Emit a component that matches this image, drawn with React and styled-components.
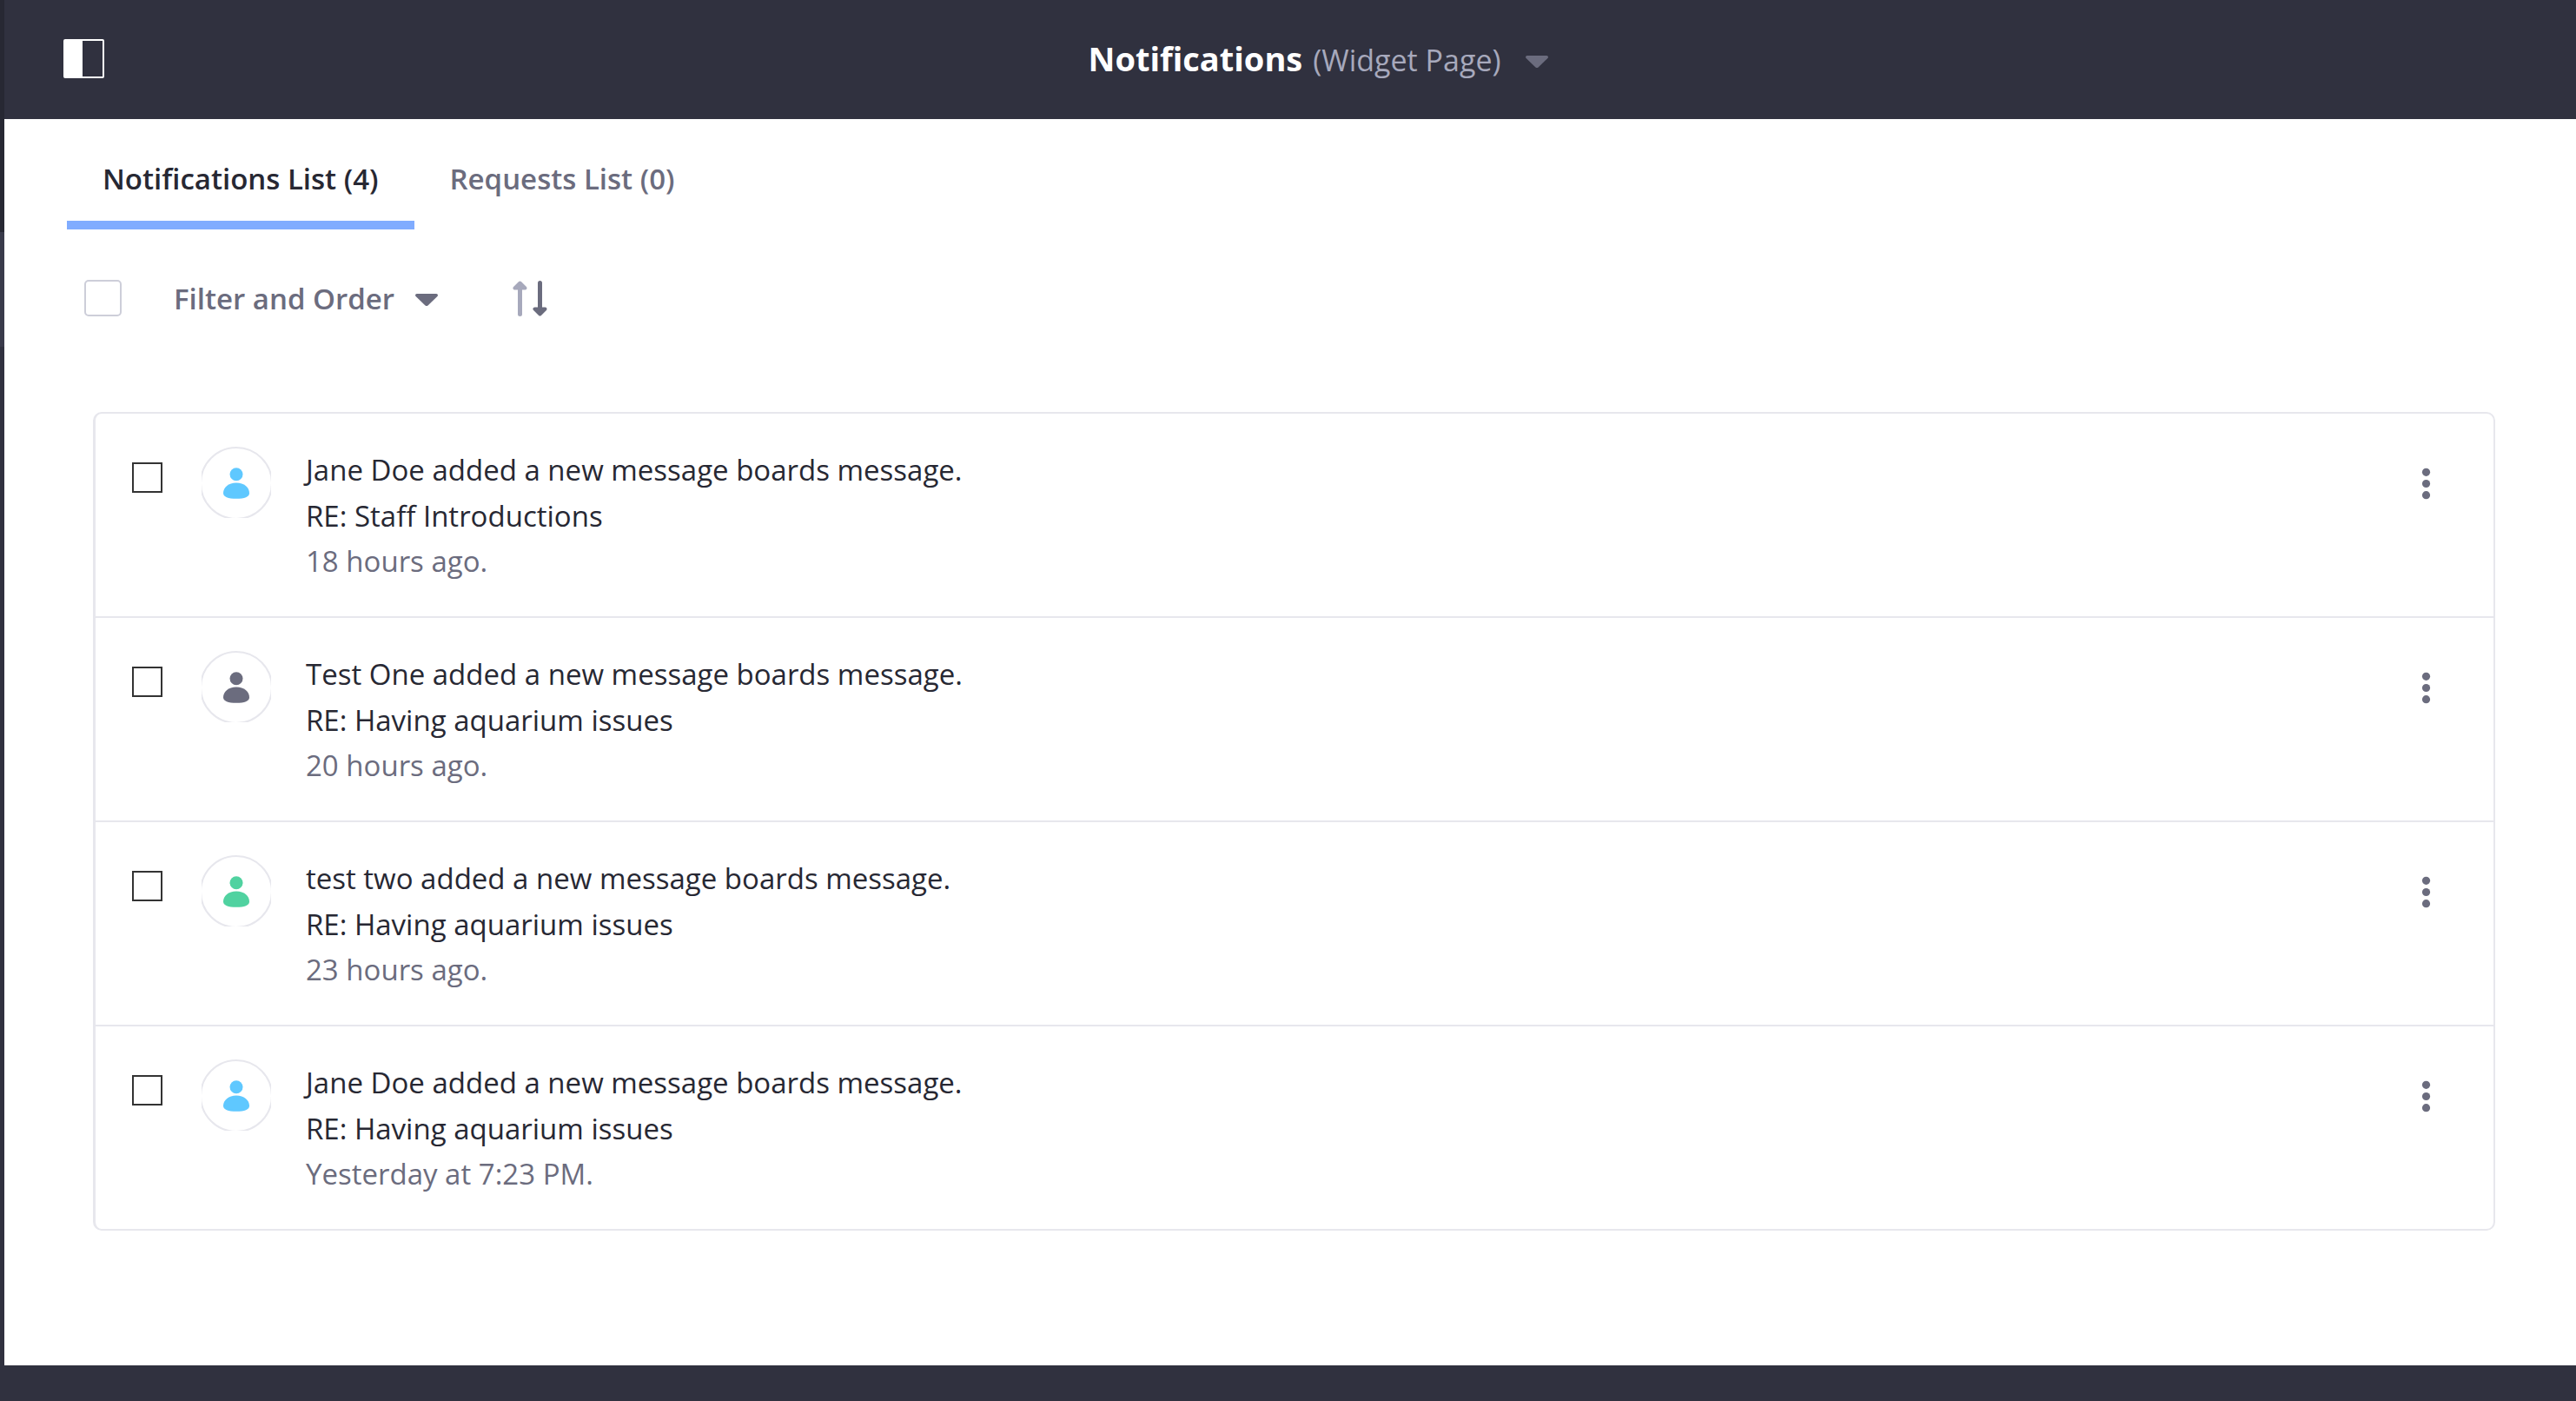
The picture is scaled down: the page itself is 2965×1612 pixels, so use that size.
import React, { useState } from "react";
import styled, { createGlobalStyle } from "styled-components";

const color = {
  ink: "#272833",
  muted: "#6b6c7e",
  soft: "#a7a9bc",
  line: "#e7e7ed",
  navy: "#30313f",
};

const GlobalStyle = createGlobalStyle`
  *, *::before, *::after { box-sizing: border-box; }
  body {
    margin: 0;
    background: ${color.navy};
    color: ${color.ink};
    font-family: "Segoe UI", "Open Sans", "Noto Sans", sans-serif;
    font-size: 33px;
    line-height: 53px;
  }
  button, input { font: inherit; color: inherit; margin: 0; }
  button { padding: 0; border: 0; background: none; cursor: pointer; }
  svg { display: block; }
`;

const Shell = styled.div`
  display: flex;
  min-height: 100vh;
`;

const Rail = styled.aside`
  display: flex;
  flex-direction: column;
  flex: none;
  width: 5px;
`;

const RailSegment = styled.div`
  flex: ${(p) => (p.$height ? "none" : 1)};
  height: ${(p) => (p.$height ? `${p.$height}px` : "auto")};
  background: ${(p) => p.$tone};
`;

const Page = styled.div`
  display: flex;
  flex-direction: column;
  flex: 1;
  min-width: 0;
`;

const Header = styled.header`
  display: flex;
  align-items: center;
  height: 137px;
  padding: 0 51px 0 68px;
  background: ${color.navy};
`;

const PanelToggle = styled.button`
  flex: none;
  padding-bottom: 2px;
`;

const HeaderCenter = styled.div`
  display: flex;
  flex: 1;
  justify-content: center;
`;

const TitleButton = styled.button`
  display: flex;
  align-items: center;
  gap: 28px;
  color: ${color.muted};
`;

const TitleText = styled.span`
  display: flex;
  align-items: baseline;
  gap: 12px;
`;

const PageName = styled.strong`
  color: #fff;
  font-size: 38px;
  font-weight: 700;
`;

const PageKind = styled.span`
  color: ${color.soft};
  font-size: 34px;
`;

const Main = styled.main`
  flex: 1;
  background: #fff;
`;

const Tabs = styled.div`
  display: flex;
  padding: 0 72px;
`;

const Tab = styled.button`
  height: 127px;
  padding: 20px 41px 0;
  border-bottom: 10px solid ${(p) => (p.$active ? "#80acff" : "transparent")};
  color: ${(p) => (p.$active ? color.ink : color.muted)};
  font-weight: 600;
`;

const Toolbar = styled.div`
  display: flex;
  align-items: center;
  height: 158px;
  padding: 0 92px;
`;

const SelectAll = styled.input`
  appearance: none;
  width: 43px;
  height: 42px;
  border: 2px solid #cdced9;
  border-radius: 5px;
  background: ${(p) => (p.checked ? "#80acff" : "#fff")};
`;

const FilterButton = styled.button`
  display: flex;
  align-items: center;
  gap: 24px;
  margin: 0 86px 0 60px;
  color: ${color.muted};
  font-weight: 600;
`;

const List = styled.ul`
  margin: 52px 93px 0 102px;
  padding: 0;
  border: 2px solid ${color.line};
  border-left-width: 3px;
  border-radius: 10px;
  list-style: none;
`;

const Item = styled.li`
  display: flex;
  align-items: flex-start;
  padding: 38px 63px 37px 42px;

  & + & {
    border-top: 2px solid ${color.line};
  }
`;

const ItemCheckbox = styled.input`
  appearance: none;
  flex: none;
  width: 35px;
  height: 35px;
  margin: 18px 45px 0 0;
  border: 2px solid #333;
  background: ${(p) => (p.checked ? "#80acff" : "#fff")};
`;

const Message = styled.div`
  flex: 1;
  min-width: 0;
  padding: 0 40px;
`;

const Line = styled.p`
  margin: 0;
`;

const Time = styled(Line)`
  color: ${color.muted};
  line-height: 52px;
`;

const MenuButton = styled.button`
  flex: none;
  width: 30px;
  height: 82px;
  color: ${color.muted};
`;

const CaretIcon = styled.svg`
  flex: none;
  margin-top: 4px;
`;

function Caret() {
  return (
    <CaretIcon width="26" height="14" viewBox="0 0 26 14" aria-hidden="true">
      <path
        fill="currentColor"
        d="M1.8 0h22.400c1.600 0 2.300 1.800 1.200 2.900l-10.600 10.300a2.600 2.600 0 0 1-3.600 0L.6 2.900C-.5 1.800.2 0 1.800 0z"
      />
    </CaretIcon>
  );
}

function PanelIcon() {
  return (
    <svg width="47" height="45" viewBox="0 0 47 45" aria-hidden="true">
      <rect x="1" y="1" width="45" height="43" rx="1" fill="none" stroke="#fff" strokeWidth="2" />
      <rect x="1" y="1" width="21" height="43" fill="#fff" />
    </svg>
  );
}

function SortIcon() {
  return (
    <svg width="41" height="41" viewBox="0 0 41 41" aria-hidden="true" strokeLinecap="round" strokeLinejoin="round">
      <g stroke={color.soft} fill={color.soft}>
        <path d="M8.5 6v32.5" strokeWidth="5" />
        <path d="M8.5 2.500L2.500 8.500h12z" strokeWidth="4" />
      </g>
      <g stroke={color.muted} fill={color.muted}>
        <path d="M31.5 35V2.500" strokeWidth="5" />
        <path d="M31.5 38.500l-6-6h12z" strokeWidth="4" />
      </g>
    </svg>
  );
}

function Avatar({ tone }) {
  return (
    <svg width="80" height="82" viewBox="0 0 80 82" aria-hidden="true">
      <circle cx="40" cy="42" r="41" fill="#fff" stroke={color.line} strokeWidth="2" />
      <circle cx="40" cy="31.700" r="7.500" fill={tone} />
      <path
        fill={tone}
        d="M40 41.500c9 0 15 5.500 15 11.800 0 4.700-5.500 6.500-15 6.500s-15-1.800-15-6.500c0-6.300 6-11.800 15-11.800z"
      />
    </svg>
  );
}

function Dots() {
  return (
    <svg width="30" height="82" viewBox="0 0 30 82" fill="currentColor" aria-hidden="true">
      <circle cx="15.500" cy="29.300" r="4.600" />
      <circle cx="15.500" cy="42.500" r="4.600" />
      <circle cx="15.500" cy="55.700" r="4.600" />
    </svg>
  );
}

const notifications = [
  { id: "n1", text: "Jane Doe added a new message boards message.", subject: "RE: Staff Introductions", time: "18 hours ago.", tone: "#5fc8ff" },
  { id: "n2", text: "Test One added a new message boards message.", subject: "RE: Having aquarium issues", time: "20 hours ago.", tone: "#6b6c7e" },
  { id: "n3", text: "test two added a new message boards message.", subject: "RE: Having aquarium issues", time: "23 hours ago.", tone: "#50d2a0" },
  { id: "n4", text: "Jane Doe added a new message boards message.", subject: "RE: Having aquarium issues", time: "Yesterday at 7:23 PM.", tone: "#5fc8ff" },
];

const Footer = styled.footer`
  height: 41px;
  background: ${color.navy};
`;

export default function App() {
  const [tab, setTab] = useState("notifications");
  const [selected, setSelected] = useState([]);
  const allSelected = selected.length === notifications.length;

  const toggle = (id) =>
    setSelected((ids) => (ids.includes(id) ? ids.filter((x) => x !== id) : [...ids, id]));

  return (
    <>
      <GlobalStyle />
      <Shell>
        <Rail>
          <RailSegment $height={267} $tone="#272833" />
          <RailSegment $height={132} $tone="#393a4a" />
          <RailSegment $tone={color.navy} />
        </Rail>
        <Page>
          <Header>
            <PanelToggle type="button" aria-label="Toggle product menu">
              <PanelIcon />
            </PanelToggle>
            <HeaderCenter>
              <TitleButton type="button">
                <TitleText>
                  <PageName>Notifications</PageName>
                  <PageKind>(Widget Page)</PageKind>
                </TitleText>
                <Caret />
              </TitleButton>
            </HeaderCenter>
          </Header>
          <Main>
            <Tabs role="tablist">
              <Tab
                type="button"
                role="tab"
                aria-selected={tab === "notifications"}
                $active={tab === "notifications"}
                onClick={() => setTab("notifications")}
              >
                Notifications List (4)
              </Tab>
              <Tab
                type="button"
                role="tab"
                aria-selected={tab === "requests"}
                $active={tab === "requests"}
                onClick={() => setTab("requests")}
              >
                Requests List (0)
              </Tab>
            </Tabs>
            <Toolbar>
              <SelectAll
                type="checkbox"
                aria-label="Select all"
                checked={allSelected}
                onChange={() => setSelected(allSelected ? [] : notifications.map((n) => n.id))}
              />
              <FilterButton type="button">
                Filter and Order
                <Caret />
              </FilterButton>
              <button type="button" aria-label="Reverse sort direction">
                <SortIcon />
              </button>
            </Toolbar>
            <List>
              {notifications.map((n) => (
                <Item key={n.id}>
                  <ItemCheckbox
                    type="checkbox"
                    aria-labelledby={n.id}
                    checked={selected.includes(n.id)}
                    onChange={() => toggle(n.id)}
                  />
                  <Avatar tone={n.tone} />
                  <Message>
                    <Line id={n.id}>{n.text}</Line>
                    <Line>{n.subject}</Line>
                    <Time>{n.time}</Time>
                  </Message>
                  <MenuButton type="button" aria-label="Actions">
                    <Dots />
                  </MenuButton>
                </Item>
              ))}
            </List>
          </Main>
          <Footer />
        </Page>
      </Shell>
    </>
  );
}
